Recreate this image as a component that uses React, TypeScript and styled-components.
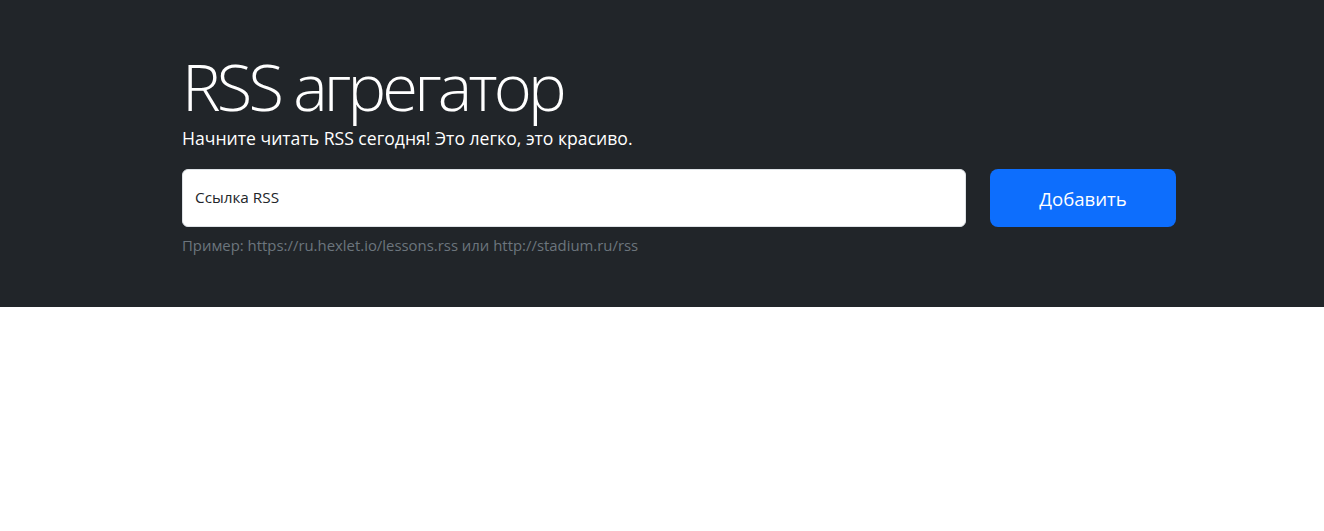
import styled, { createGlobalStyle } from "styled-components";

const GlobalStyle = createGlobalStyle`
  body {
    margin: 0;
    background: #fff;
    font-family: "Open Sans", "Noto Sans", "Liberation Sans", sans-serif;
    color: #212529;
  }
  * {
    box-sizing: border-box;
  }
`;

const Hero = styled.section`
  background: #212529;
  padding: 46px 148px 51px 182px;
  color: #fff;
`;

const Title = styled.h1`
  margin: 0;
  font-size: 65px;
  font-weight: 300;
  letter-spacing: -3.8px;
  line-height: 80px;
  white-space: nowrap;
`;

const Lead = styled.p`
  margin: 0 0 19px;
  font-size: 17.6px;
  font-weight: 400;
  line-height: 24px;
`;

const FormRow = styled.form`
  display: flex;
  gap: 24px;
`;

const Floating = styled.div`
  position: relative;
  flex: 1;
`;

const Input = styled.input`
  width: 100%;
  height: 58px;
  border: 1px solid #dee2e6;
  border-radius: 6px;
  padding: 16px 12px;
  font-family: inherit;
  font-size: 15.3px;
  background: #fff;
  outline: none;
`;

const FloatLabel = styled.label`
  position: absolute;
  top: 0;
  left: 0;
  height: 100%;
  padding: 16px 13px;
  font-size: 15.3px;
  line-height: 24px;
  color: #212529;
  pointer-events: none;
`;

const AddButton = styled.button`
  display: flex;
  align-items: center;
  justify-content: center;
  width: 186px;
  height: 58px;
  border: none;
  border-radius: 8px;
  background: #0d6efd;
  color: #fff;
  font-family: inherit;
  font-size: 18.6px;
  cursor: pointer;
`;

const Hint = styled.p`
  margin: 8px 0 0;
  font-size: 14.9px;
  line-height: 21px;
  color: #6c757d;
`;

export default function App() {
  return (
    <>
      <GlobalStyle />
      <Hero>
        <Title>RSS агрегатор</Title>
        <Lead>Начните читать RSS сегодня! Это легко, это красиво.</Lead>
        <FormRow onSubmit={(e) => e.preventDefault()}>
          <Floating>
            <Input id="url-input" aria-label="url" autoComplete="off" />
            <FloatLabel htmlFor="url-input">Ссылка RSS</FloatLabel>
          </Floating>
          <AddButton type="submit" aria-label="add">
            Добавить
          </AddButton>
        </FormRow>
        <Hint>Пример: https://ru.hexlet.io/lessons.rss или http://stadium.ru/rss</Hint>
      </Hero>
    </>
  );
}
